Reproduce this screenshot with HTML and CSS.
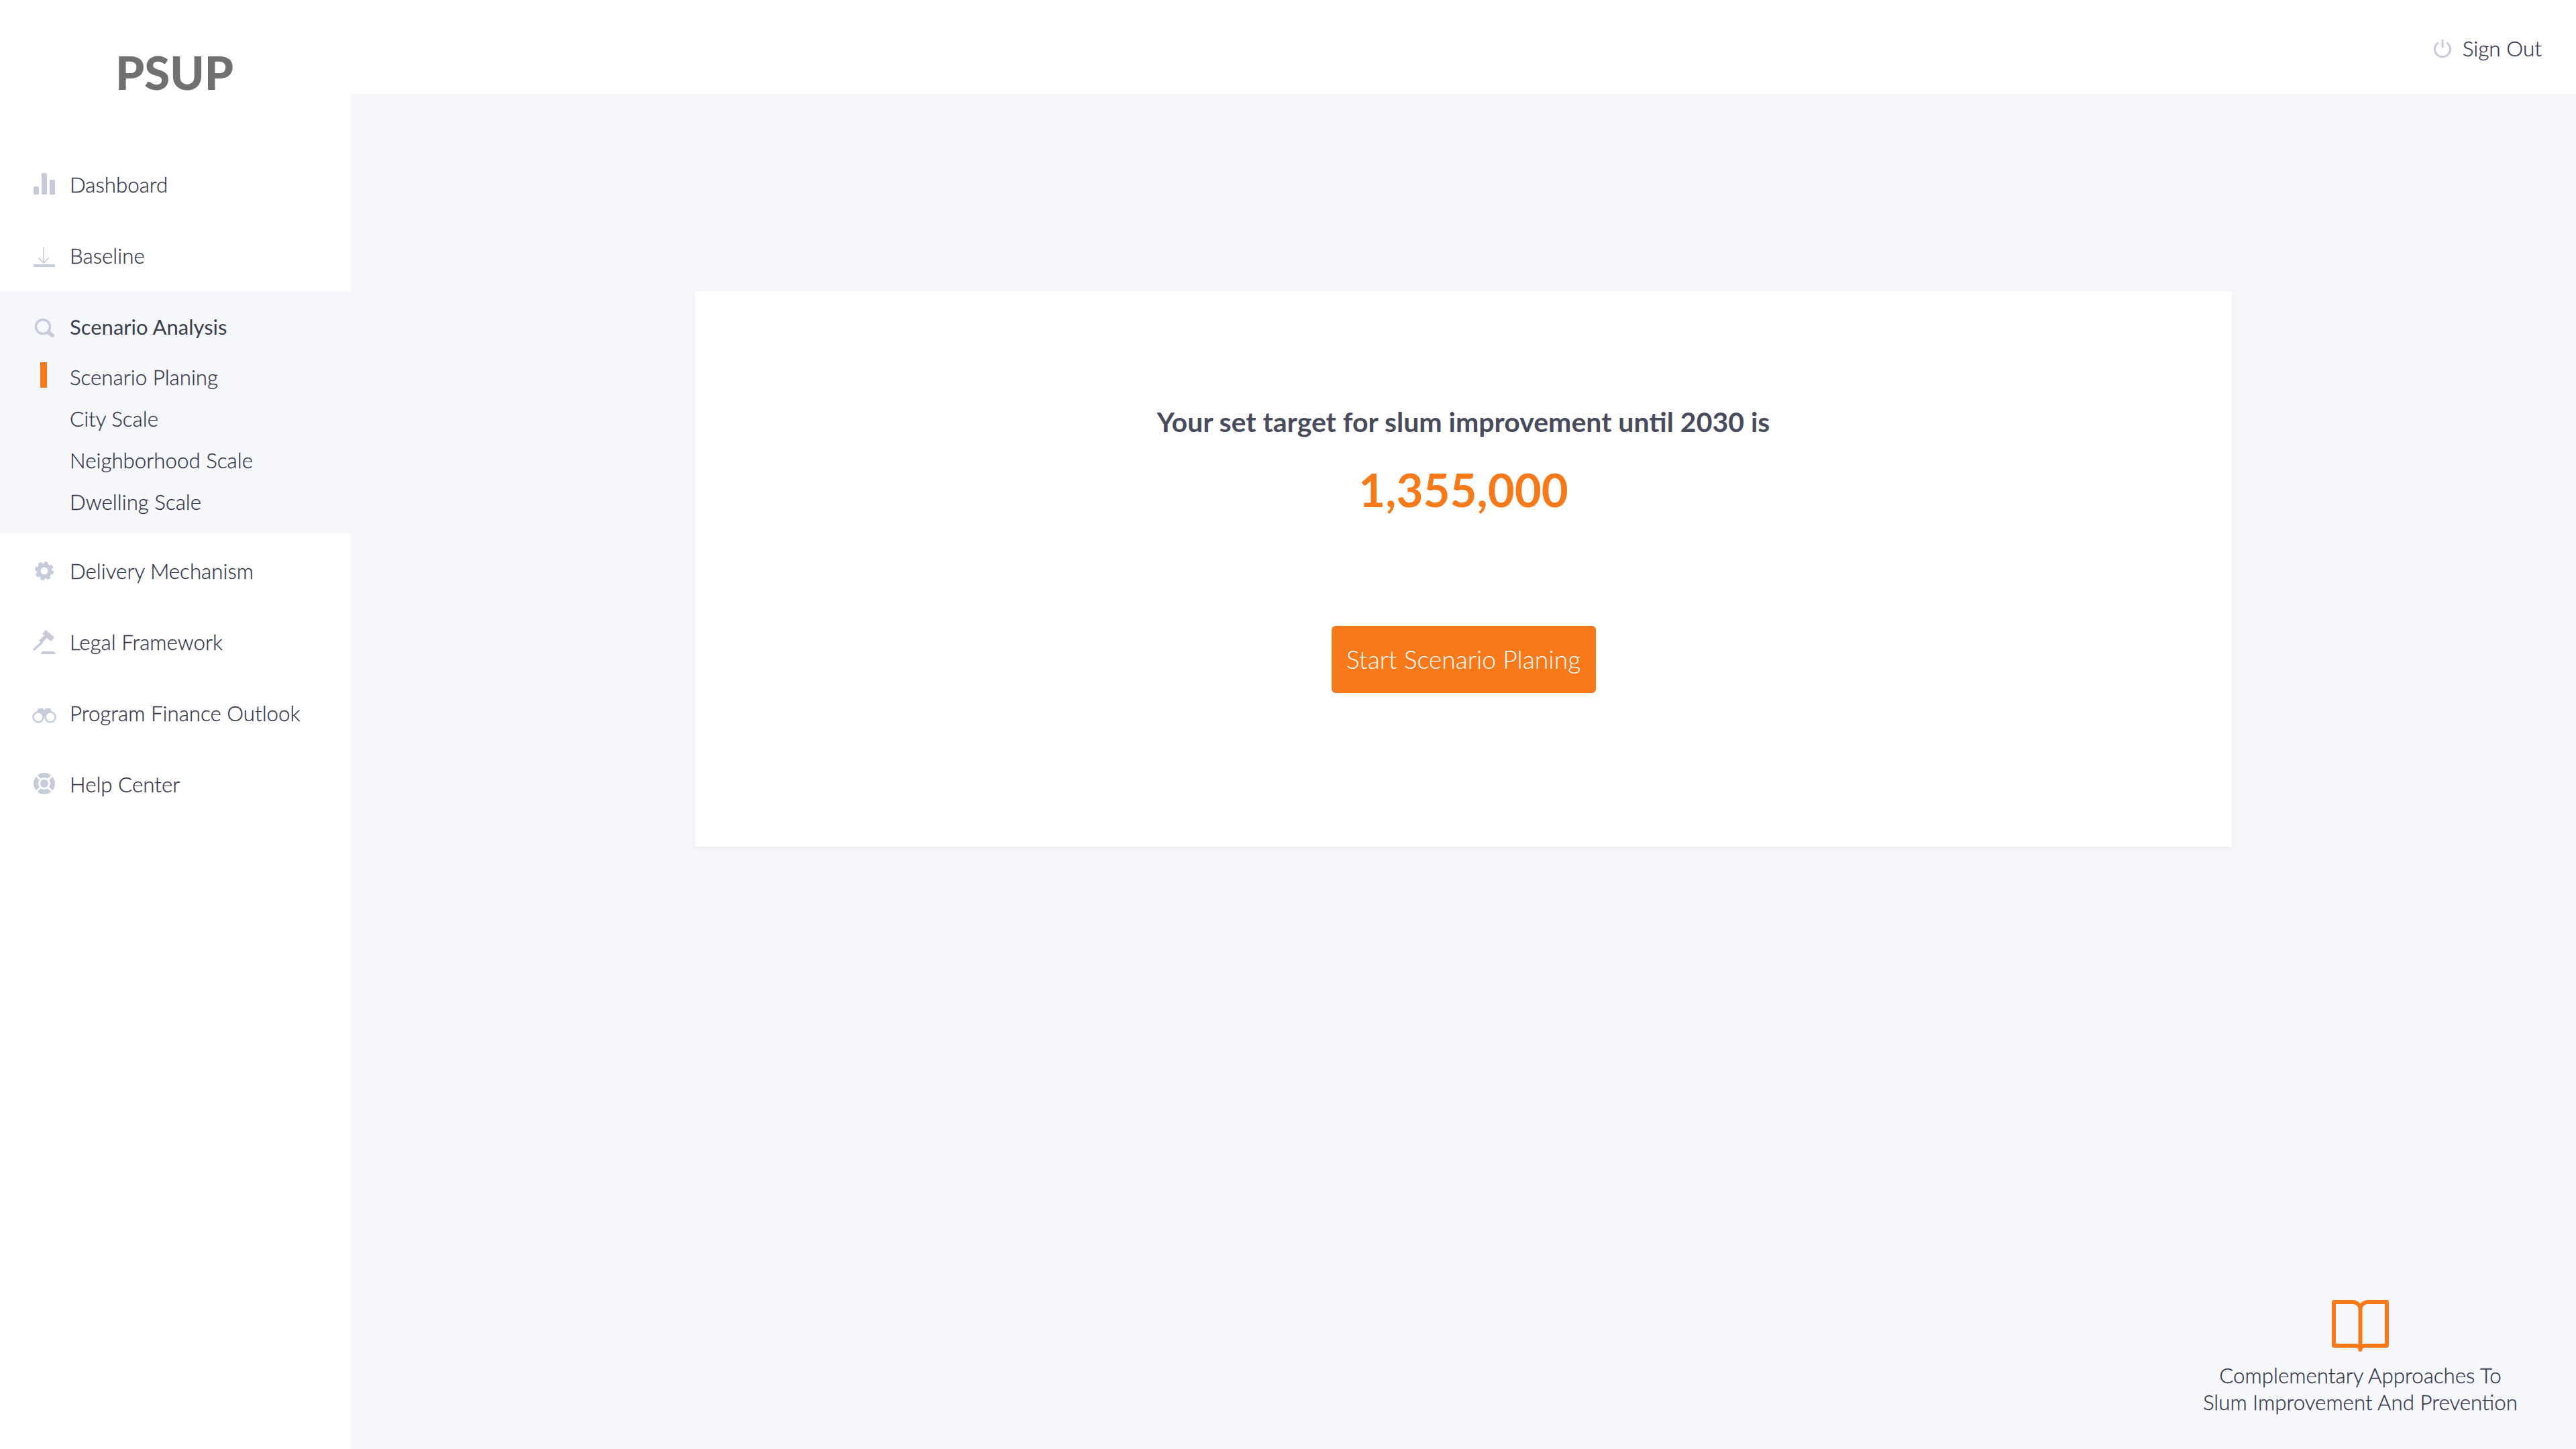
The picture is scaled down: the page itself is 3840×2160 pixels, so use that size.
FILE: index.html
```html
<!DOCTYPE html>
<html lang="en">
<head>
<meta charset="utf-8">
<title>PSUP</title>
<link rel="stylesheet" href="styles.css">
</head>
<body>
<div class="app">
  <aside class="sidebar">
    <div class="logo">PSUP</div>
    <nav class="nav">
      <a class="row"><svg class="icon" viewBox="0 0 36 36"><rect x="2" y="20" width="8" height="12" rx="1.5"/><rect x="14" y="0" width="8" height="32" rx="1.5"/><rect x="26" y="10" width="8" height="22" rx="1.5"/></svg><span class="label">Dashboard</span></a>
      <a class="row"><svg class="icon" viewBox="0 0 36 36"><path class="line thin" d="M17 4V28M9 20L17 28L25 20"/><rect x="2" y="30" width="32" height="4"/></svg><span class="label">Baseline</span></a>
      <section class="section">
        <a class="row head"><svg class="icon" viewBox="0 0 36 36"><circle class="line" cx="16" cy="17" r="10.500" stroke-width="3.500"/><path class="line" d="M25 26L30 30" stroke-width="6" stroke-linecap="round"/></svg><span class="label">Scenario Analysis</span></a>
        <a class="sub active"><i class="marker"></i><span>Scenario Planing</span></a>
        <a class="sub">City Scale</a>
        <a class="sub">Neighborhood Scale</a>
        <a class="sub">Dwelling Scale</a>
      </section>
      <div class="lower">
        <a class="row"><svg class="icon" viewBox="0 0 36 36"><circle class="line" cx="18" cy="17" r="8.500" stroke-width="6"/><circle class="line" cx="18" cy="17" r="12" stroke-width="4" stroke-dasharray="5.400 4"/></svg><span class="label">Delivery Mechanism</span></a>
        <a class="row"><svg class="icon" viewBox="0 0 36 36"><path d="M20 -1L33 10L28 16L22 11L14 19L10 15L18 7L15 5Z"/><path class="line" d="M14 18L3 28" stroke-width="3.500" stroke-linecap="round"/><path d="M12 35L15 31H32L36 35Z"/></svg><span class="label">Legal Framework</span></a>
        <a class="row"><svg class="icon" viewBox="0 0 36 36"><path d="M6 17L9 10H16L18 13L20 10H27L30 17L22 22H14Z"/><circle class="hollow" cx="9" cy="23" r="7.500"/><circle class="hollow" cx="27" cy="23" r="7.500"/></svg><span class="label">Program Finance Outlook</span></a>
        <a class="row"><svg class="icon" viewBox="0 0 36 36"><circle cx="18" cy="16" r="16"/><circle class="cut" cx="18" cy="16" r="7.500" stroke-width="3"/><path class="cut" d="M6 4L12 10M30 4L24 10M6 28L12 22M30 28L24 22" stroke-width="3"/></svg><span class="label">Help Center</span></a>
      </div>
    </nav>
  </aside>
  <div class="main">
    <header class="topbar">
      <a class="signout"><svg class="power" viewBox="0 0 28 28"><path d="M8 5.500A11.500 11.500 0 1 0 20 5.500M14 1V13"/></svg><span>Sign Out</span></a>
    </header>
    <main class="content">
      <div class="card">
        <h1 class="title">Your set target for slum improvement until 2030 is</h1>
        <div class="number">1,355,000</div>
        <button class="cta">Start Scenario Planing</button>
      </div>
      <a class="guide">
        <svg class="book" viewBox="0 0 85 77"><path d="M42.500 14C42.500 7 37 3 31 3H3V68H35C39 68 42.500 70 42.500 74C42.500 70 46 68 50 68H82V3H54C48 3 42.500 7 42.500 14V68"/></svg>
        <span>Complementary Approaches To<br>Slum Improvement And Prevention</span>
      </a>
    </main>
  </div>
</div>
</body>
</html>
```
FILE: styles.css
```css
* { box-sizing: border-box; }
html, body { margin: 0; height: 100%; }
body {
  font-family: Lato, "Open Sans", sans-serif;
  font-weight: 300;
  color: #32354a;
  background: #f6f7fb;
  -webkit-text-stroke: 0.3px #32354a;
}
.app { display: grid; grid-template-columns: 523px 1fr; height: 2160px; }
.sidebar { background: #fff; }
.logo {
  height: 140px;
  padding: 66px 0 0 172px;
  font-size: 69px;
  line-height: 84px;
  font-weight: 900;
  color: #707070;
  -webkit-text-stroke: 0;
}
.nav { margin-top: 83px; font-size: 31.3px; line-height: 40px; }
.row { display: flex; align-items: center; gap: 20px; height: 106px; padding-left: 48px; }
.label { margin-bottom: 2px; }
.icon { width: 36px; height: 36px; flex: none; overflow: visible; fill: #c5cbda; }
.line { fill: none; stroke: #c5cbda; }
.thin { stroke-width: 1.5; }
.hollow { fill: #fff; stroke: #c5cbda; stroke-width: 2.5; }
.cut { fill: none; stroke: #fff; }
.section { background: #f6f7fb; padding-bottom: 16px; }
.head { height: 96px; padding-top: 10px; font-size: 31px; font-weight: 400; color: #3a3d4d; -webkit-text-stroke: 0; }
.sub { display: flex; align-items: center; height: 62px; padding-left: 104px; }
.active { padding-left: 60px; }
.marker { width: 10px; height: 38px; margin: 0 34px 6px 0; background: #f7791a; }
.lower { margin-top: 4px; }
.main { display: flex; flex-direction: column; min-width: 0; }
.topbar { display: flex; justify-content: flex-end; align-items: flex-start; height: 140px; background: #fff; padding: 52px 51px 0 0; }
.signout { display: flex; align-items: center; gap: 16px; font-size: 31.5px; line-height: 40px; }
.power { width: 28px; height: 28px; fill: none; stroke: #c5cbd8; stroke-width: 3; }
.content { flex: 1; display: flex; flex-direction: column; }
.card {
  display: flex; flex-direction: column; align-items: center;
  height: 828px; margin: 294px 513px 0;
  padding-top: 170px;
  background: #fff;
  box-shadow: 0 2px 8px rgba(60, 70, 110, .06);
  -webkit-text-stroke: 0;
}
.title { margin: 0; font-size: 41px; line-height: 50px; font-weight: 700; color: #484b5b; }
.number { margin-top: 31px; font-size: 69px; line-height: 90px; font-weight: 700; color: #f7791a; }
.cta {
  width: 394px; height: 100px; margin-top: 158px;
  border: 0; border-radius: 6px;
  background: #f7791a; color: #fff;
  font: 300 37.3px/48px Lato, sans-serif;
}
.guide { display: flex; flex-direction: column; align-items: center; align-self: flex-end; margin-top: auto; padding: 0 87px 50px 0; font-size: 31.3px; line-height: 40px; text-align: center; }
.book { width: 85px; height: 77px; margin-bottom: 15px; fill: none; stroke: #f7791a; stroke-width: 6; stroke-linejoin: round; stroke-linecap: round; }
```
